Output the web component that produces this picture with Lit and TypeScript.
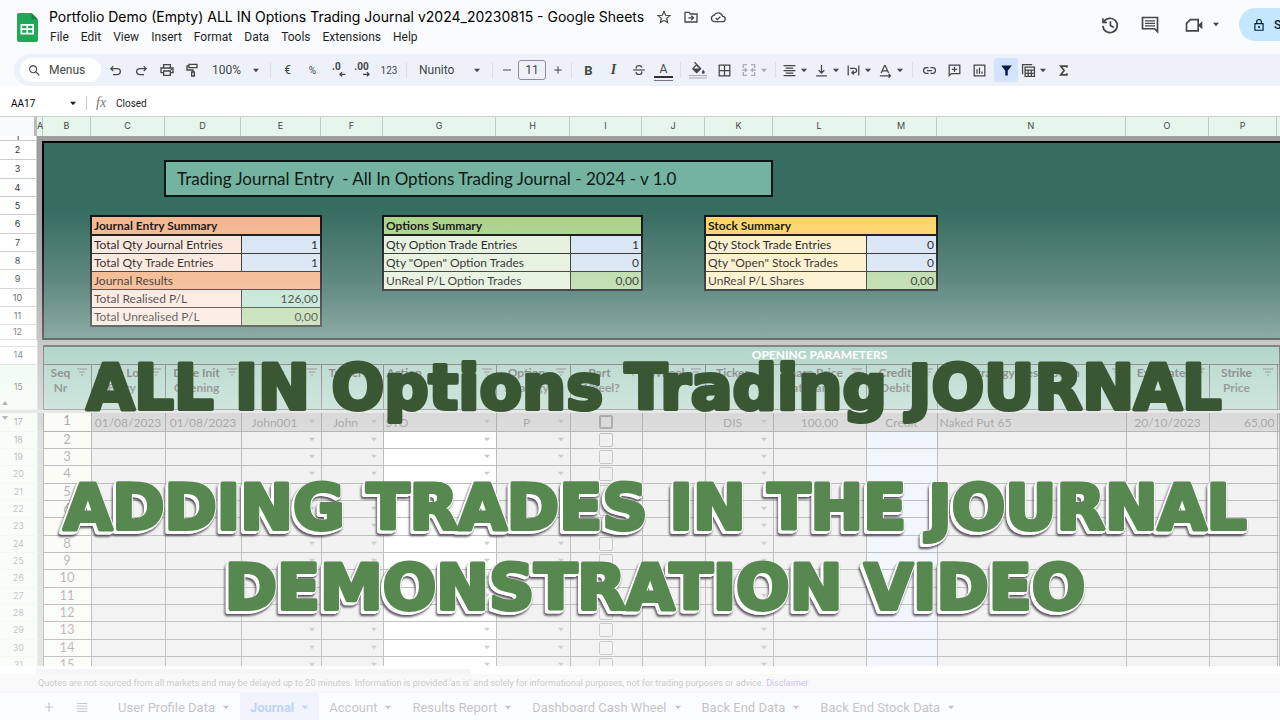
import { LitElement, html, svg, css, nothing } from "lit";
import { customElement } from "lit/decorators.js";
import { classMap } from "lit/directives/class-map.js";

const LETTERS = ["A", "B", "C", "D", "E", "F", "G", "H", "I", "J", "K", "L", "M", "N", "O", "P"];

const HEADS: [string, string][] = [
  ["Seq", "Nr"], ["Date Log", "Entry"], ["Date Init", "Opening"], ["Acc", ""], ["Trader", ""], ["Action", ""],
  ["Option", "Strategy"], ["Part", "Wheel?"], ["Wheel", ""], ["Ticker", ""], ["Share Price", "at Trans"],
  ["Credit", "Debit"], ["Strategy Description", ""], ["Exp Date", ""], ["Strike", "Price"],
];

const FIRST = ["1", "01/08/2023", "01/08/2023", "John001", "John", "STO", "P", "", "", "DIS", "100,00", "Credit", "Naked Put 65", "20/10/2023", "65,00"];
const DROPS = [3, 4, 5, 6, 9];
const MENUS = ["File", "Edit", "View", "Insert", "Format", "Data", "Tools", "Extensions", "Help"];
const TABS = ["User Profile Data", "Journal", "Account", "Results Report", "Dashboard Cash Wheel", "Back End Data", "Back End Stock Data"];

const icon = (body: unknown, size = 16, box = 24) =>
  html`<svg class="icon" width=${size} height=${size} viewBox="0 0 ${box} ${box}" aria-hidden="true">${body}</svg>`;
const line = (d: string, w = 2) => svg`<path d=${d} fill="none" stroke="currentColor" stroke-width=${w}/>`;
const fill = (d: string) => svg`<path d=${d} fill="currentColor" fill-rule="evenodd"/>`;
const arrow = html`<svg class="arrow" width="8" height="5" viewBox="0 0 8 5" aria-hidden="true"><path d="M1 .8h6L4 4.2z" fill="currentColor"/></svg>`;

const I = {
  star: line("M12 3.5l2.5 5.9 6.4.5-4.9 4.2 1.5 6.3-5.5-3.4-5.5 3.4 1.5-6.3-4.9-4.2 6.4-.5z", 1.8),
  move: [line("M3 5h6l2 2.500h10V19.500H3z"), line("M8 13.200h7M12.500 10l3.200 3.200-3.200 3.200")],
  cloud: [line("M7 19h11.500a4 4 0 0 0 .5-8A7 7 0 0 0 6 9.500 4.800 4.800 0 0 0 7 19z"), line("M8.500 13.500l2.500 2.500 4.500-4.500")],
  history: [line("M4.500 8.500A8.600 8.600 0 1 1 3.500 13M3.500 4v5h5"), line("M12.500 7.500v5.200l4 2.400")],
  comment: [line("M3 3h18v17l-3.500-3.500H3z"), line("M6 7h12M6 10h12M6 13h12", 1.7)],
  meet: [line("M7.500 5.500H17V19H3V10z"), fill("M17 12l5-4.500v9.500l-5-4.500z")],
  lock: [line("M5 9.500h14V21H5zM8 9.500V6.500a4 4 0 0 1 8 0v3"), fill("M12 13.500a1.800 1.800 0 1 0 .01 0z")],
  search: [line("M9.500 3a6.500 6.500 0 1 0 .01 0zM14.300 14.300L21 21")],
  undo: line("M8.500 5L4.500 9l4 4M4.500 9H15a4.500 4.500 0 0 1 0 9.500H8"),
  redo: line("M15.500 5l4 4-4 4M19.500 9H9a4.500 4.500 0 0 0 0 9.500h7"),
  print: [line("M7 8V4h10v4M7 16H3V9h18v7h-4M7 13.500h10V20H7z"), fill("M17.500 10.500h2v2h-2z")],
  paint: [line("M6 3.500h12v5H6zM6 6H3v6h9v3M10 15h4v6h-4z")],
  dec0: [svg`<text x="3" y="12" class="glyph">.0</text>`, line("M23 18.500h-8M18 15.500l-3 3 3 3")],
  dec00: [svg`<text x="-1" y="12" class="glyph">.00</text>`, line("M12 18.500h9M18 15.500l3 3-3 3")],
  strike: [line("M2 12h20"), line("M17 8c-.5-2-2.200-3.500-5-3.500S7.200 6 7.200 8c0 .8.200 1.300.6 1.800M16.300 14.500c.4.500.6 1 .6 1.700 0 2.200-2.200 3.500-4.900 3.500-3 0-5-1.500-5.300-4")],
  bucket: [fill("M8 1l-1.300 1.300 2.500 2.500-4.700 4.700a1 1 0 0 0 0 1.500l5 5a1 1 0 0 0 1.500 0l5.800-5.800zM10 6.300L13.500 10h-7.200zM19 11.500s-2 2.200-2 3.500a2 2 0 0 0 4 0c0-1.300-2-3.500-2-3.500z"), svg`<path d="M0 19.500h24M0 22.700h24" stroke="#a3a7ad" stroke-width="1.300"/>`],
  grid: line("M3.500 3.500h17v17h-17zM12 3.500v17M3.500 12h17"),
  merge: line("M9 4H3.500v5M15 4h5.500v5M9 20H3.500v-5M15 20h5.500v-5M2 12h6M6 9.500L8.500 12 6 14.500M22 12h-6M18 9.500L15.500 12l2.500 2.500"),
  align: line("M2.500 4h19M6 8h12M2.500 12h19M6 16h12M2.500 20h19"),
  valign: line("M12 3v13M7.500 11.500L12 16l4.500-4.500M3.500 20.500h17"),
  wrap: line("M3.500 4v16M20.500 4v16M6.500 8.500h7a3.500 3.500 0 0 1 0 7H10M12.500 12.500l-3 3 3 3"),
  rotate: line("M5 16L10.500 4h1L17 16M7 12.500h8M3 20.500h17M17 17.500l3 3-3 3"),
  link: line("M10.500 7.500H7a4.500 4.500 0 0 0 0 9h3.500M13.500 7.500H17a4.500 4.500 0 0 1 0 9h-3.500M8 12h8"),
  add: line("M3.500 3.500h17V17H7l-3.500 3.500zM12 6v8.500M7.800 10.200h8.500"),
  chart: line("M3.500 3.500h17v17h-17zM8 10v7M12 7v10M16 13.500V17"),
  filter: fill("M3.500 4h17L14 12.500V20h-4v-7.500z"),
  calc: line("M2.500 18V2.500H18M6.500 6.500h15v15h-15zM6.500 11.500h15M6.500 16.500h15M11.500 11.500v10M16.500 11.500v10"),
  sigma: line("M17.500 7.500V5H7.500l5.500 7-5.500 7h10v-2.500", 2.600),
  plus: line("M12 4.500v15M4.500 12h15"),
  minus: line("M4 12h16"),
  bars: line("M3 6h18M3 10.500h18M3 15h18M3 19.500h18", 1.600),
};

@customElement("app-root")
export class AppRoot extends LitElement {
  static styles = css`
    :host { display: flex; flex-direction: column; position: relative; height: 100vh; overflow: hidden; background: #fff; color: #1f1f1f;
      font-family: Roboto, sans-serif; --cols: 37px 6px 48px 74px 76px 80px 62px 113px 74px 72px 63px 68px 93px 71px 189px 83px 68px 1fr; }
    * { box-sizing: border-box; }
    button, input { font: inherit; color: inherit; background: none; border: 0; margin: 0; padding: 0; }
    a { color: inherit; text-decoration: none; }
    .icon, .arrow { display: block; flex: none; }
    .glyph { font: 700 15px Roboto, sans-serif; fill: currentColor; }

    header { display: flex; height: 54px; padding: 7px 0 0 17px; background: #f9fbfd; flex: none; }
    .logo { margin: 6px 11px 0 0; flex: none; }
    .titles { display: flex; flex-direction: column; gap: 3px; }
    .name { display: flex; align-items: center; height: 19px; font: 400 14px/19px Inter, sans-serif; color: #000; white-space: nowrap; }
    .marks { display: flex; gap: 11px; margin-left: 12px; color: #444746; }
    .menus { display: flex; gap: 12px; padding-left: 1px; font-size: 12px; line-height: 16px; }
    .right { display: flex; align-items: center; height: 35px; margin-left: auto; color: #444746; }
    .right .meet { display: flex; align-items: center; gap: 8px; margin: 0 19px 0 24px; }
    .right .talk { margin-left: 20px; }
    .share { display: flex; align-items: center; gap: 8px; width: 41px; height: 33px; padding-left: 13px; overflow: hidden;
      border-radius: 17px 0 0 17px; background: #c2e7ff; color: #001d35; font-size: 12px; font-weight: 500; }

    .bar { background: #f9fbfd; padding-left: 14px; flex: none; }
    .tools { display: flex; align-items: center; height: 32px; padding-left: 6px; border-radius: 17px 0 0 17px; background: #edf2fa; color: #444746; font-size: 12px; }
    .pill { display: flex; align-items: center; gap: 8px; width: 81px; height: 24px; padding-left: 8px; margin-right: 1px; border-radius: 12px; background: #fff; }
    .tools button { display: flex; align-items: center; justify-content: center; height: 24px; width: 25px; flex: none; }
    .tools .pill { width: 81px; justify-content: flex-start; }
    .tools .wide { width: 26px; }
    .tools .slim { width: 19px; }
    .tools .zoom { width: 60px; gap: 11px; }
    .tools .font { width: 77px; padding: 0 7px 0 8px; justify-content: space-between; }
    .tools .pair { width: 30px; gap: 3px; margin-right: 2px; }
    .tools .merge { width: 34px; gap: 3px; color: #a9adb3; }
    .tools .on { margin: 0 1px 0 2px; width: 24px; border-radius: 3px; background: #d3e3fd; color: #041e49; }
    .sep { width: 1px; height: 16px; margin: 0 4px; background: #dbe0e8; flex: none; }
    .size { width: 28px; height: 20px; margin: 0 2px; border: 1px solid #8b8f94; border-radius: 3px; text-align: center; }
    .bold { font-weight: 700; font-size: 13px; }
    .small { font-size: 10px; }
    .italic { font: italic 700 14px "Liberation Serif", serif; }
    .under { display: block; width: 19px; line-height: 14px; border-bottom: 2px solid #333; box-shadow: 0 2px 0 #edf2fa, 0 3px 0 #777; }

    .formula { display: flex; align-items: center; height: 30px; padding: 4px 12px 0 11px; font-size: 10px; flex: none; }
    .cellname { width: 58px; color: #000; }
    .formula .sep { margin: 0 9px; background: #ccc; height: 14px; }
    .fx { font: italic 14px "Liberation Serif", serif; color: #777; width: 20px; }
    .value { flex: 1; }

    .sheet { flex: 1; min-height: 0; overflow: hidden; background: #9e9e9e; }
    .letters { display: grid; grid-template-columns: var(--cols); height: 20px; border-top: 1px solid #c9d3cc; background: #e6f6ec; font: 9px/18px Inter, sans-serif; color: #444; text-align: center; }
    .letters span { border-right: 1px solid #bfcac2; }
    .letters .corner { background: #f8f9fa; border-right: 3px solid #bcbcbc; }

    .panel { display: grid; grid-template-columns: var(--cols); grid-template-rows: 5px 19px 19px 18px 18px 19px 18px 18px 19px 18px 18px 15px; }
    .no { grid-column: 1; background: #fff; border-right: 1px solid #ccc; border-bottom: 1px solid #ccc; font: 9px/18px Inter, sans-serif; text-align: center; padding-right: 1px; color: #333; overflow: hidden; }
    .no.cut { line-height: 4px; }
    .no.last { line-height: 14px; }
    .back { grid-area: 2 / 3 / 13 / 19; background: #376c61; border: 2px solid #000; border-right: 0; margin-left: -1px; }
    .banner { grid-area: 3 / 4 / 5 / 13; margin: 0 0 0 73px; border: 2px solid #0b1512; background: #74b39f; font: 17px/33px Lato, sans-serif; color: #0c1a16; padding-left: 11px; white-space: pre; }
    .sum { border-collapse: collapse; width: calc(100% + 2px); margin-left: -1px; table-layout: fixed; border: 2px solid #111; font: 12px/16px Lato, sans-serif; color: #111; align-self: start; }
    .sum tr { height: 18px; }
    .sum td, .sum th { border: 1px solid #222; padding: 1px 2px 0; text-align: left; height: 18px; white-space: nowrap; }
    .sum thead th { border-bottom: 2px solid #111; }
    .sum .num { text-align: right; background: #d6e4f4; }
    .sum td.num.g { background: #b4d7a0; }
    .sum td.num.m { background: #b7e1cd; }
    .s1 { grid-area: 6 / 4 / 12 / 7; } .s2 { grid-area: 6 / 8 / 12 / 11; } .s3 { grid-area: 6 / 12 / 12 / 15; }
    .s1 .k { width: 150px; } .s2 .k { width: 187px; } .s3 .k { width: 161px; }
    .s1 th { background: #f5b58f; } .s1 td { background: #fbe5da; } .s1 th.sub { font-weight: 400; background: #f4b083; }
    .s2 th { background: #abd28b; } .s2 td { background: #e4f0dc; }
    .s3 th { background: #fdd468; } .s3 td { background: #fdefc8; }

    .journal { border-collapse: collapse; table-layout: fixed; width: 100%; font: 12px/16px Lato, sans-serif; color: #000; }
    .journal td, .journal th { padding: 0; overflow: hidden; white-space: nowrap; }
    .journal .rn { background: #fff; border: 0; border-bottom: 1px solid #ccc; border-right: 1px solid #bbb; font: 9px/12px Inter, sans-serif; color: #222; text-align: center; position: relative; }
    .journal .rn.sel { background: #e8f8ec; border-bottom-color: #d5e8da; }
    .journal td.a { background: #9e9e9e; border-width: 0; }
    .strip { height: 6px; line-height: 5px; }
    .strip th.rn { line-height: 5px; }
    .top { height: 18px; }
    .top td { background: #74b39f; border: 1px solid #222; border-top: 2px solid #222; color: #fff; font-weight: 700; text-align: center; line-height: 14px; }
    .top td.pre, .top td.mid { border-right: 0; }
    .top td.mid, .top td.post { border-left: 0; }
    .journal .top td.mid { overflow: visible; }
    .title { display: flex; justify-content: center; }
    .heads { height: 45px; }
    .heads th.h { background: #7cbaa6; border: 1px solid #222; vertical-align: top; line-height: 15px; font-weight: 700; }
    .hc { display: flex; justify-content: space-between; padding: 0 2px 0 1px; color: #111; }
    .hc span { flex: 1; text-align: center; }
    .hc.left span { text-align: left; padding-left: 2px; }
    .hc svg { margin: 3px 2px 0 0; flex: none; }
    .gap { height: 4px; }
    .gap td { background: #c4c0c0; }
    .row { height: 17px; }
    .row:nth-child(3n+1) { height: 18px; }
    .row td { background: #d2d2d2; border: 1px solid #222; text-align: center; }
    .row.first td { background: #979797; border-top: 0; }
    .row td.b, .row.first td.b { background: #f2f6e2; font-size: 13px; line-height: 14px; vertical-align: top; }
    .row td.g { background: #fff; }
    .row td.m { background: #d2e3f8; }
    .row.first td.g, .row.first td.m { background: #979797; }
    .row td.lft { text-align: left; padding-left: 2px; }
    .row td.rgt { text-align: right; padding-right: 2px; }
    .cell { display: flex; align-items: center; height: 15px; padding: 3px 5px 0 0; }
    .cell span { flex: 1; }
    .cell .arrow { color: #555; margin-top: -4px; }
    .text { display: block; height: 15px; padding-top: 1px; }
    .row td.i { line-height: 0; }
    .box { appearance: none; display: inline-block; width: 14px; height: 14px; border: 1px solid #444; border-radius: 2px; vertical-align: middle; }
    .first .box { border: 2px solid #111; }
    .mark { position: absolute; left: 2px; width: 6px; height: 4px; }
    .mark.up { bottom: 4px; } .mark.down { top: 3px; }

    footer { flex: none; background: #fff; }
    .scroll { height: 8px; padding-top: 3px; }
    .thumb { height: 5px; margin-left: 36px; width: 34%; background: #dadce4; }
    .note { background: #e9e9e9; margin: 0; padding-left: 38px; height: 18px; font-size: 9px; line-height: 19px; color: #333; white-space: nowrap; }
    .note a { color: #460ab9; }
    .tabs { display: flex; height: 28px; padding-left: 42px; background: #f0f4fa; border-top: 1px solid #dde3ee; font-size: 13px; line-height: 29px; color: #222; }
    .tabs button { display: flex; align-items: center; gap: 7px; padding: 1px 10px 0; white-space: nowrap; }
    .tabs .tool { width: 16px; padding: 0; margin-right: 17px; }
    .tabs .active { background: #c7d8f5; color: #0b57d0; font-weight: 700; }

    .veil { position: absolute; inset: 0; pointer-events: none;
      background: linear-gradient(rgb(255 255 255 / 0) 210px, rgb(255 255 255 / .2) 280px, rgb(255 255 255 / .43) 340px, rgb(255 255 255 / .62) 405px, rgb(255 255 255 / .7) 450px, rgb(255 255 255 / .73) 640px, rgb(255 255 255 / .73)); }
    .poster { position: absolute; inset: 0; margin: 0; pointer-events: none; }
    .poster svg { display: block; width: 100%; height: 100%; }
    .poster text { font-family: "DejaVu Sans", sans-serif; font-weight: 700; text-anchor: middle; stroke-linejoin: round; stroke-width: 4px; }
    .dark { font-size: 62px; fill: #395733; stroke: #395733; }
    .lite { font-size: 63px; fill: #56884f; stroke: #56884f; }
    .glow { filter: drop-shadow(1px 0 0 #fff) drop-shadow(-2px 1px 0 #fff) drop-shadow(-1px 2px 0 #fff) drop-shadow(-1px 2px 1px rgb(60 50 65 / .85)); }
  `;

  private summary(cls: string, title: string, rows: [string, string?, string?][]) {
    return html`<table class="sum ${cls}">
      <colgroup><col class="k"><col></colgroup>
      <thead><tr><th colspan="2">${title}</th></tr></thead>
      <tbody>${rows.map(([k, v, t]) => v === undefined
        ? html`<tr><th class="sub" colspan="2">${k}</th></tr>`
        : html`<tr><td>${k}</td><td class="num ${t ?? ""}">${v}</td></tr>`)}</tbody>
    </table>`;
  }

  private row(n: number) {
    const first = n === 0;
    return html`<tr class=${classMap({ row: true, first })}>
      <th class="rn sel" scope="row">${17 + n}${first ? html`<svg class="mark down" viewBox="0 0 6 4"><path d="M0 0h6L3 4z" fill="#333"/></svg>` : nothing}</th>
      <td class="a"></td>
      ${FIRST.map((v, i) => {
        const text = i === 0 ? String(n + 1) : first ? v : "";
        const cls = classMap({ b: i === 0, g: i === 5, i: i === 7, m: i === 11, lft: i === 5 || i === 12, rgt: i === 14 });
        if (i === 7) return html`<td class=${cls}><input class="box" type="checkbox" aria-label="Part of wheel, entry ${n + 1}"></td>`;
        if (DROPS.includes(i)) return html`<td class=${cls}><div class="cell"><span>${text}</span>${arrow}</div></td>`;
        return html`<td class=${cls}>${i === 0 ? text : html`<span class="text">${text}</span>`}</td>`;
      })}
      <td></td>
    </tr>`;
  }

  render() {
    const b = (label: string, body: unknown, cls = "") => html`<button class=${cls} aria-label=${label}>${body}</button>`;
    const sep = html`<span class="sep"></span>`;
    return html`
      <header>
        <svg class="logo" width="21" height="29" viewBox="0 0 21 29" aria-hidden="true">
          <path d="M2 0h12.500L21 6.500V27a2 2 0 0 1-2 2H2a2 2 0 0 1-2-2V2a2 2 0 0 1 2-2z" fill="#22a757"/>
          <path d="M14.500 0L21 6.500h-6.500z" fill="#15843f"/>
          <path d="M3.500 11h13.500v10.500H3.500zM5.200 12.700v2.600h4.200v-2.600zM11.100 12.700v2.600h4.200v-2.600zM5.200 17.100v2.600h4.200v-2.600zM11.100 17.100v2.600h4.200v-2.600z" fill="#fff" fill-rule="evenodd"/>
        </svg>
        <div class="titles">
          <div class="name">Portfolio Demo (Empty) ALL IN Options Trading Journal v2024_20230815 - Google Sheets
            <span class="marks">${icon(I.star)}${icon(I.move)}${icon(I.cloud)}</span></div>
          <nav class="menus">${MENUS.map((m) => html`<a href="#">${m}</a>`)}</nav>
        </div>
        <div class="right">
          ${b("History", icon(I.history, 20))}
          ${b("Comments", icon(I.comment, 20), "talk")}
          <button class="meet" aria-label="Meet">${icon(I.meet, 20)}${arrow}</button>
          <button class="share">${icon(I.lock, 14)}Share</button>
        </div>
      </header>

      <div class="bar"><div class="tools">
        <button class="pill">${icon(I.search, 13)}Menus</button>
        ${b("Undo", icon(I.undo, 15), "wide")}${b("Redo", icon(I.redo, 15), "wide")}${b("Print", icon(I.print), "wide")}${b("Paint format", icon(I.paint), "wide")}
        <button class="zoom">100%${arrow}</button>${sep}
        <button>€</button><button class="small">%</button>${b("Decrease decimals", icon(I.dec0))}${b("Increase decimals", icon(I.dec00), "wide")}
        <button class="small wide">123</button>${sep}
        <button class="font">Nunito${arrow}</button>${sep}
        ${b("Smaller", icon(I.minus, 12), "slim")}<input class="size" aria-label="Font size" value="11">${b("Larger", icon(I.plus, 12), "slim")}${sep}
        <button class="bold">B</button><button class="italic">I</button>${b("Strikethrough", icon(I.strike, 14))}
        <button><span class="under">A</span></button>${sep}
        ${b("Fill colour", icon(I.bucket, 18), "wide")}${b("Borders", icon(I.grid, 15), "wide")}
        <button class="merge" aria-label="Merge">${icon(I.merge)}${arrow}</button>${sep}
        ${[["Align", I.align], ["Vertical align", I.valign], ["Wrap", I.wrap], ["Rotate", I.rotate]].map(([l, i]) =>
          html`<button class="pair" aria-label=${l}>${icon(i, 15)}${arrow}</button>`)}${sep}
        ${b("Link", icon(I.link, 15))}${b("Comment", icon(I.add, 15))}${b("Chart", icon(I.chart, 15))}
        ${b("Filter", icon(I.filter, 15), "on")}<button class="pair" aria-label="Filter views">${icon(I.calc, 15)}${arrow}</button>
        ${b("Functions", icon(I.sigma, 15))}
      </div></div>

      <div class="formula">
        <input class="cellname" aria-label="Cell" value="AA17">${arrow}${sep}
        <span class="fx">fx</span><input class="value" aria-label="Formula" value="Closed">
      </div>

      <main class="sheet">
        <div class="letters"><span class="corner"></span>${LETTERS.map((l) => html`<span>${l}</span>`)}</div>
        <section class="panel">
          <div class="back"></div>
          ${["1", "2", "3", "4", "5", "6", "7", "8", "9", "10", "11", "12"].map((n) =>
            html`<span class=${classMap({ no: true, cut: n === "1", last: n === "12" })}>${n}</span>`)}
          <div class="banner">Trading Journal Entry  - All In Options Trading Journal - 2024 - v 1.0</div>
          ${this.summary("s1", "Journal Entry Summary", [["Total Qty Journal Entries", "1"], ["Total Qty Trade Entries", "1"], ["Journal Results"], ["Total Realised P/L", "126,00", "m"], ["Total Unrealised P/L", "0,00", "g"]])}
          ${this.summary("s2", "Options Summary", [["Qty Option Trade Entries", "1"], ["Qty \"Open\" Option Trades", "0"], ["UnReal P/L Option Trades", "0,00", "g"]])}
          ${this.summary("s3", "Stock Summary", [["Qty Stock Trade Entries", "0"], ["Qty \"Open\" Stock Trades", "0"], ["UnReal P/L Shares", "0,00", "g"]])}
        </section>
        <table class="journal">
          <colgroup>${[37, 6, 48, 74, 76, 80, 62, 113, 74, 72, 63, 68, 93, 71, 189, 83, 68].map((w) => html`<col width=${w}>`)}<col></colgroup>
          <thead>
            <tr class="strip"><th class="rn"></th><td class="a" colspan="17"></td></tr>
            <tr class="top"><th class="rn">14</th><td class="a"></td><td class="pre" colspan="10"></td><td class="mid"><span class="title">OPENING PARAMETERS</span></td><td class="post" colspan="5"></td></tr>
            <tr class="heads"><th class="rn sel">15<svg class="mark up" viewBox="0 0 6 4"><path d="M0 4h6L3 0z" fill="#333"/></svg></th><td class="a"></td>
              ${HEADS.map(([x, y], i) => html`<th class="h" scope="col"><div class=${classMap({ hc: true, left: i === 5 })}><span>${x}<br>${y}</span>
                <svg width="10" height="8" viewBox="0 0 10 8"><path d="M0 1h10M2 4h6M4 7h2" stroke="#333" fill="none"/></svg></div></th>`)}
              <th class="h"></th></tr>
            <tr class="gap"><td></td><td colspan="17"></td></tr>
          </thead>
          <tbody>${Array.from({ length: 15 }, (_, n) => this.row(n))}</tbody>
        </table>
      </main>

      <footer>
        <div class="scroll"><div class="thumb"></div></div>
        <p class="note">Quotes are not sourced from all markets and may be delayed up to 20 minutes. Information is provided 'as is' and solely for informational purposes, not for trading purposes or advice. <a href="#">Disclaimer</a></p>
        <nav class="tabs">
          ${b("Add sheet", icon(I.plus, 14), "tool")}${b("All sheets", icon(I.bars, 14), "tool")}
          ${TABS.map((t) => html`<button class=${classMap({ active: t === "Journal" })}>${t}${arrow}</button>`)}
        </nav>
      </footer>

      <div class="veil"></div>
      <h1 class="poster"><svg viewBox="0 0 1280 720">
        <text class="dark" x="654" y="409">ALL IN Options Trading JOURNAL</text>
        <g class="glow"><text class="lite" x="655" y="529">ADDING TRADES IN THE JOURNAL</text>
        <text class="lite" x="655" y="609">DEMONSTRATION VIDEO</text></g>
      </svg></h1>
    `;
  }
}
